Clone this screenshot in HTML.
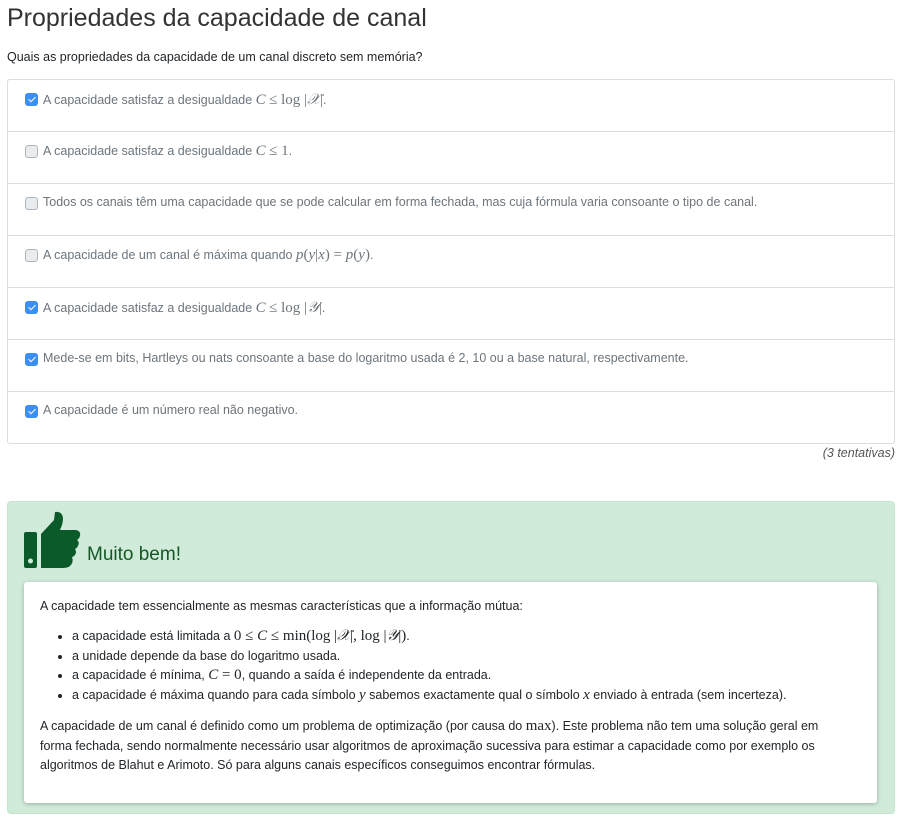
<!DOCTYPE html>
<html><head><meta charset="utf-8"><style>
body{margin:0;background:#fff;font-family:"Liberation Sans",sans-serif;color:#212529;width:906px;height:823px;overflow:hidden;position:relative}
.m{font-family:"Liberation Serif",serif;font-size:15px}
.mi{font-family:"Liberation Serif",serif;font-style:italic;font-size:15px}
h1{position:absolute;left:7px;top:4px;margin:0;font-weight:normal;font-size:25px;color:#333}
.q{position:absolute;left:7px;top:50px;font-size:12.5px}
.list{position:absolute;left:7px;top:79px;width:886px;border:1px solid #ddd;border-radius:3px}
.row{height:51px;border-top:1px solid #ddd;position:relative;font-size:12.5px;color:#6c757d}
.row:first-child{border-top:none}
.row span.t{position:absolute;left:35px;top:11px}
.cb{position:absolute;left:17px;top:13px;width:11px;height:11px;border:1px solid #adb5bd;border-radius:3px;background:#e9ecef}
.cb.on{background:#3b8ff0;border-color:#3b8ff0}
.cb.on:after{content:"";position:absolute;left:3.5px;top:1px;width:3px;height:6px;border:solid #fff;border-width:0 1.5px 1.5px 0;transform:rotate(45deg)}
.tent{position:absolute;right:11px;top:446px;font-style:italic;font-size:12.5px;color:#555}
.ok{position:absolute;left:7px;top:501px;width:886px;height:311px;background:#d0ebda;border:1px solid #c3e6cb;border-radius:4px}
.mb{position:absolute;left:79px;top:42px;font-size:19px;color:#155724}
.card{position:absolute;left:16px;top:80px;width:853px;height:221px;background:#fff;border-radius:3px;box-shadow:0 1px 4px rgba(0,0,0,.25);font-size:12.5px;line-height:19.5px}
.card p{margin:0;position:absolute;left:16px;width:800px}
.card ul{margin:0;padding-left:48px;position:absolute;top:45px;left:0}
</style></head><body>
<h1>Propriedades da capacidade de canal</h1>
<div class="q">Quais as propriedades da capacidade de um canal discreto sem memória?</div>
<div class="list">
<div class="row"><div class="cb on"></div><span class="t">A capacidade satisfaz a desigualdade <span class="mi">C</span> <span class="m">≤ log |</span><span class="mi">𝒳</span><span class="m">|</span>.</span></div>
<div class="row"><div class="cb"></div><span class="t">A capacidade satisfaz a desigualdade <span class="mi">C</span> <span class="m">≤ 1</span>.</span></div>
<div class="row"><div class="cb"></div><span class="t">Todos os canais têm uma capacidade que se pode calcular em forma fechada, mas cuja fórmula varia consoante o tipo de canal.</span></div>
<div class="row"><div class="cb"></div><span class="t">A capacidade de um canal é máxima quando <span class="mi">p</span><span class="m">(</span><span class="mi">y</span><span class="m">|</span><span class="mi">x</span><span class="m">) = </span><span class="mi">p</span><span class="m">(</span><span class="mi">y</span><span class="m">)</span>.</span></div>
<div class="row"><div class="cb on"></div><span class="t">A capacidade satisfaz a desigualdade <span class="mi">C</span> <span class="m">≤ log |</span><span class="mi">𝒴</span><span class="m">|</span>.</span></div>
<div class="row"><div class="cb on"></div><span class="t">Mede-se em bits, Hartleys ou nats consoante a base do logaritmo usada é 2, 10 ou a base natural, respectivamente.</span></div>
<div class="row"><div class="cb on"></div><span class="t">A capacidade é um número real não negativo.</span></div>
</div>
<div class="tent">(3 tentativas)</div>
<div class="ok">
<svg style="position:absolute;left:14px;top:8px" width="60" height="60" viewBox="0 0 60 60"><rect x="2" y="22" width="13" height="36" rx="2" fill="#0b5a2a"/><circle cx="8.5" cy="51" r="2.5" fill="#d0ebda"/><path d="M19 24 L32 10 L33 2 Q40 1 41 8 Q41 14 38 20 L54 20 Q59 21 58 26 Q57 29 55 30 Q58 32 56 36 Q55 38 53 39 Q55 42 53 45 Q51 47 50 47 Q52 52 48 56 Q46 58 40 58 L19 58 Z" fill="#0b5a2a"/></svg>
<div class="mb">Muito bem!</div>
<div class="card">
<p style="top:15px">A capacidade tem essencialmente as mesmas características que a informação mútua:</p>
<ul>
<li>a capacidade está limitada a <span class="m">0 ≤ </span><span class="mi">C</span><span class="m"> ≤ min(log |</span><span class="mi">𝒳</span><span class="m">|, log |</span><span class="mi">𝒴</span><span class="m">|)</span>.</li>
<li>a unidade depende da base do logaritmo usada.</li>
<li>a capacidade é mínima, <span class="mi">C</span><span class="m"> = 0</span>, quando a saída é independente da entrada.</li>
<li>a capacidade é máxima quando para cada símbolo <span class="mi">y</span> sabemos exactamente qual o símbolo <span class="mi">x</span> enviado à entrada (sem incerteza).</li>
</ul>
<p style="top:135px">A capacidade de um canal é definido como um problema de optimização (por causa do <span class="m">max</span>). Este problema não tem uma solução geral em forma fechada, sendo normalmente necessário usar algoritmos de aproximação sucessiva para estimar a capacidade como por exemplo os algoritmos de Blahut e Arimoto. Só para alguns canais específicos conseguimos encontrar fórmulas.</p>
</div>
</div>
</body></html>
